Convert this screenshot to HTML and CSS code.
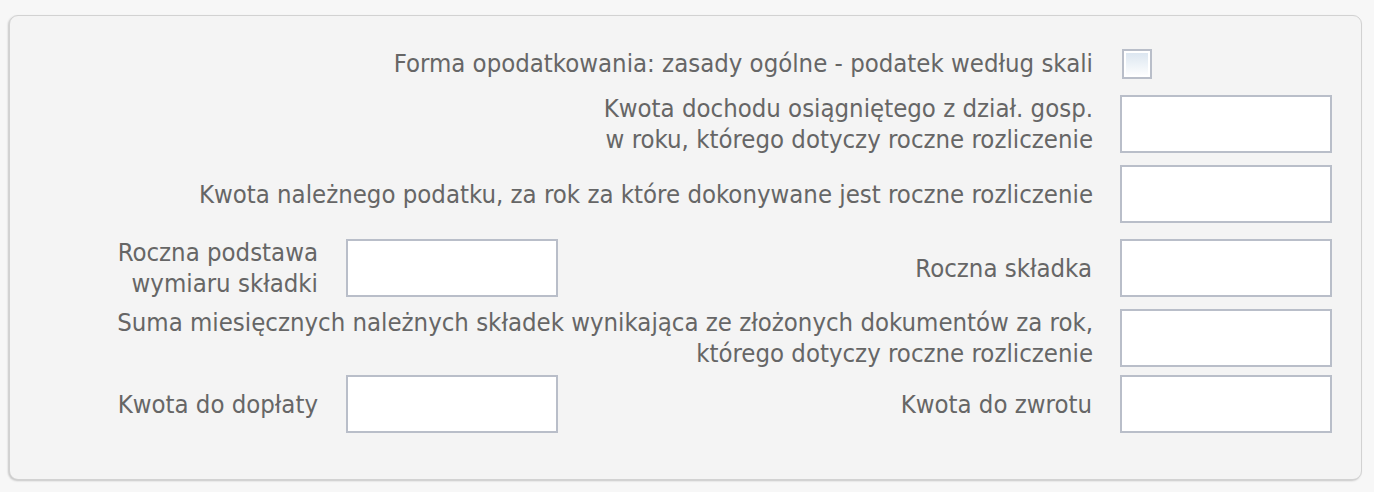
FILE: index.html
```html
<!DOCTYPE html>
<html lang="pl">
<head>
<meta charset="utf-8">
<title>Rozliczenie roczne</title>
<link rel="stylesheet" href="styles.css">
</head>
<body>
<div class="panel">
  <div class="row row-check">
    <div class="label span3">Forma opodatkowania: zasady ogólne - podatek według skali</div>
    <div class="ctl"><span class="checkbox"></span></div>
  </div>
  <div class="row gap-15">
    <div class="label span3">Kwota dochodu osiągniętego z dział. gosp.<br>w roku, którego dotyczy roczne rozliczenie</div>
    <div class="ctl"><span class="input"></span></div>
  </div>
  <div class="row gap-14">
    <div class="label span3">Kwota należnego podatku, za rok za które dokonywane jest roczne rozliczenie</div>
    <div class="ctl"><span class="input"></span></div>
  </div>
  <div class="row gap-14">
    <div class="label">Roczna podstawa<br>wymiaru składki</div>
    <div class="ctl"><span class="input"></span></div>
    <div class="label">Roczna składka</div>
    <div class="ctl"><span class="input"></span></div>
  </div>
  <div class="row gap-12">
    <div class="label span3">Suma miesięcznych należnych składek wynikająca ze złożonych dokumentów za rok,<br>którego dotyczy roczne rozliczenie</div>
    <div class="ctl"><span class="input"></span></div>
  </div>
  <div class="row gap-10">
    <div class="label">Kwota do dopłaty</div>
    <div class="ctl"><span class="input"></span></div>
    <div class="label">Kwota do zwrotu</div>
    <div class="ctl"><span class="input"></span></div>
  </div>
</div>
</body>
</html>
```
FILE: styles.css
```css
html, body {
  margin: 0;
  padding: 0;
  background: #f7f7f7;
}
body {
  padding: 15px 12px 12px 9px;
  font-family: "DejaVu Sans Condensed", "DejaVu Sans", sans-serif;
  color: #666666;
}
.panel {
  background: #f4f4f4;
  border: 1px solid #d2d2d2;
  border-radius: 9px;
  box-shadow: -1px 1px 2px rgba(0,0,0,0.2);
  padding: 32px 0 0 0;
  height: 465px;
  box-sizing: border-box;
}
.row {
  display: grid;
  grid-template-columns: 336px 212px 562px 212px;
  align-items: center;
  height: 58px;
}
.row-check {
  height: 30px;
}
.gap-15 { margin-top: 15px; }
.gap-14 { margin-top: 14px; }
.gap-12 { margin-top: 12px; }
.gap-10 { margin-top: 10px; }
.label {
  text-align: right;
  padding-right: 28px;
  font-size: 25.5px;
  line-height: 31px;
  white-space: nowrap;
}
.span3 {
  grid-column: 1 / 4;
  padding-right: 27px;
}
.ctl {
  display: flex;
  align-items: center;
}
.input {
  display: block;
  width: 212px;
  height: 58px;
  box-sizing: border-box;
  background: #ffffff;
  border: 2px solid #b9bec9;
}
.checkbox {
  display: block;
  width: 30px;
  height: 30px;
  box-sizing: border-box;
  border: 2px solid #b9bec9;
  box-shadow: inset 0 0 0 2px #ffffff;
  background: linear-gradient(#d9e4ef, #ffffff);
  margin-left: 2px;
}
```
